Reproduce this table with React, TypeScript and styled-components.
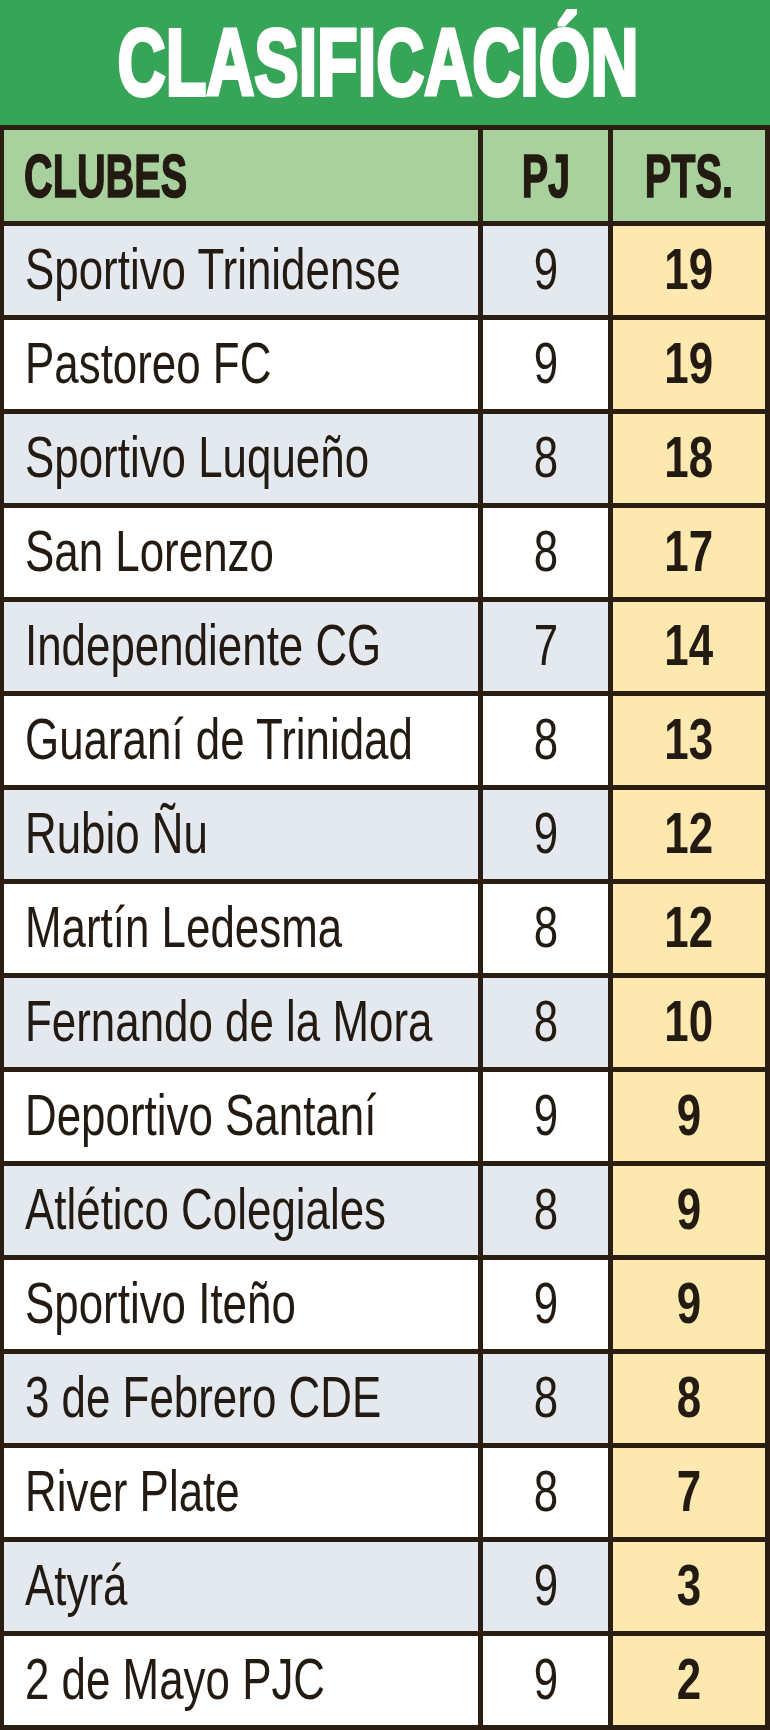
import React from 'react';
import styled, { createGlobalStyle } from 'styled-components';

const GlobalStyle = createGlobalStyle`
  html, body {
    margin: 0;
    padding: 0;
    background: #ffffff;
  }
  body {
    font-family: 'Liberation Sans', Arial, sans-serif;
    color: #231a12;
  }
`;

const Page = styled.div`
  display: flex;
  flex-direction: column;
  width: 770px;
  height: 1730px;
  overflow: hidden;
`;

const Title = styled.h1`
  display: flex;
  align-items: center;
  justify-content: center;
  margin: 0;
  height: 125px;
  padding-right: 14px;
  background: #36a557;
  color: #ffffff;
  font-family: 'Liberation Sans', Arial, sans-serif;
  font-size: 95px;
  font-weight: 700;
  line-height: 1;
`;

const Squeeze = styled.span<{ $scale: number; $origin?: string; $stroke?: number }>`
  display: inline-block;
  white-space: nowrap;
  transform: scaleX(${(p) => p.$scale});
  transform-origin: ${(p) => p.$origin || 'left center'};
  -webkit-text-stroke: ${(p) => (p.$stroke ? `${p.$stroke}px currentColor` : '0')};
`;

const Table = styled.div`
  display: grid;
  grid-template-columns: 474px 125px 152px;
  grid-auto-rows: 89px;
  grid-template-rows: 91px;
  gap: 5px;
  padding: 5px 5px 5px 4px;
  background: #2a1d12;
`;

const HeadCell = styled.div<{ $center?: boolean }>`
  display: flex;
  align-items: center;
  justify-content: ${(p) => (p.$center ? 'center' : 'flex-start')};
  padding-left: ${(p) => (p.$center ? '0' : '20px')};
  background: #a9d19d;
  font-size: 62px;
  font-weight: 700;
  line-height: 1;
  overflow: hidden;
`;

const Cell = styled.div<{ $tone: 'blue' | 'white' | 'yellow'; $center?: boolean; $bold?: boolean }>`
  display: flex;
  align-items: center;
  justify-content: ${(p) => (p.$center ? 'center' : 'flex-start')};
  padding-left: ${(p) => (p.$center ? '0' : '21px')};
  padding-bottom: 3px;
  background: ${(p) => (p.$tone === 'blue' ? '#e4e9ef' : p.$tone === 'yellow' ? '#fde9b0' : '#ffffff')};
  font-size: 57px;
  font-weight: ${(p) => (p.$bold ? 700 : 400)};
  line-height: 1;
  overflow: hidden;
`;

const clubs: { name: string; pj: number; pts: number }[] = [
  { name: 'Sportivo Trinidense', pj: 9, pts: 19 },
  { name: 'Pastoreo FC', pj: 9, pts: 19 },
  { name: 'Sportivo Luqueño', pj: 8, pts: 18 },
  { name: 'San Lorenzo', pj: 8, pts: 17 },
  { name: 'Independiente CG', pj: 7, pts: 14 },
  { name: 'Guaraní de Trinidad', pj: 8, pts: 13 },
  { name: 'Rubio Ñu', pj: 9, pts: 12 },
  { name: 'Martín Ledesma', pj: 8, pts: 12 },
  { name: 'Fernando de la Mora', pj: 8, pts: 10 },
  { name: 'Deportivo Santaní', pj: 9, pts: 9 },
  { name: 'Atlético Colegiales', pj: 8, pts: 9 },
  { name: 'Sportivo Iteño', pj: 9, pts: 9 },
  { name: '3 de Febrero CDE', pj: 8, pts: 8 },
  { name: 'River Plate', pj: 8, pts: 7 },
  { name: 'Atyrá', pj: 9, pts: 3 },
  { name: '2 de Mayo PJC', pj: 9, pts: 2 },
];

export default function App() {
  return (
    <Page>
      <GlobalStyle />
      <Title>
        <Squeeze $scale={0.7} $origin="center" $stroke={4}>
          CLASIFICACIÓN
        </Squeeze>
      </Title>

      <Table>
        <HeadCell>
          <Squeeze $scale={0.64} $stroke={1.5}>CLUBES</Squeeze>
        </HeadCell>
        <HeadCell $center>
          <Squeeze $scale={0.64} $origin="center" $stroke={1.5}>PJ</Squeeze>
        </HeadCell>
        <HeadCell $center>
          <Squeeze $scale={0.64} $origin="center" $stroke={1.5}>PTS.</Squeeze>
        </HeadCell>

        {clubs.map((club, i) => {
          const tone = i % 2 === 0 ? 'blue' : 'white';
          return (
            <React.Fragment key={club.name}>
              <Cell $tone={tone}>
                <Squeeze $scale={0.77}>{club.name}</Squeeze>
              </Cell>
              <Cell $tone={tone} $center>
                <Squeeze $scale={0.77} $origin="center">{club.pj}</Squeeze>
              </Cell>
              <Cell $tone="yellow" $center $bold>
                <Squeeze $scale={0.77} $origin="center">{club.pts}</Squeeze>
              </Cell>
            </React.Fragment>
          );
        })}
      </Table>
    </Page>
  );
}
